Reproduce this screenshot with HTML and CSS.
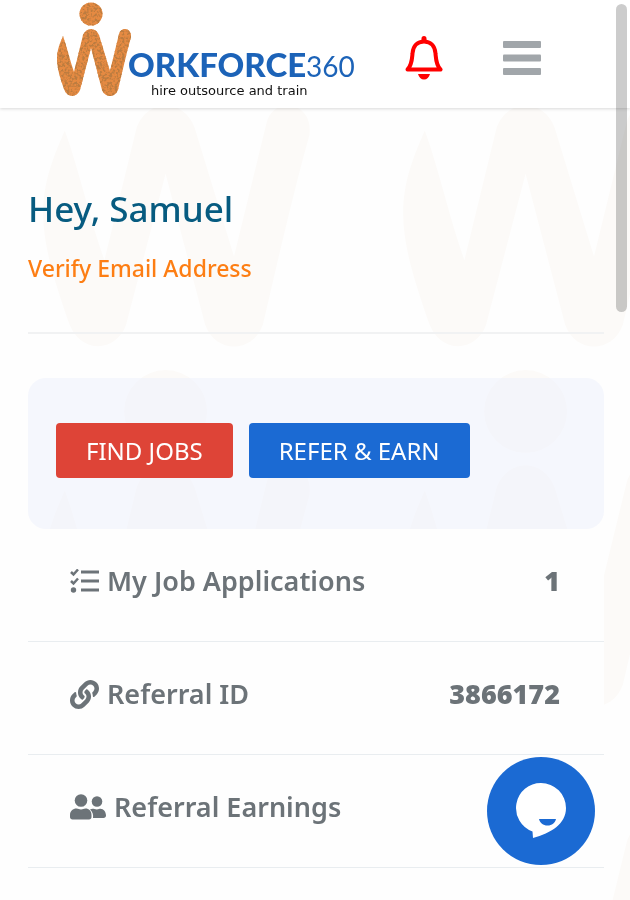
FILE: index.html
```html
<!DOCTYPE html>
<html lang="en">

<head>
  <meta charset="UTF-8" />
  <meta name="viewport" content="width=device-width, initial-scale=1" />
  <title>Workforce360</title>
  <link rel="stylesheet" href="styles.css">
</head>

<body>
  <svg class="watermark" aria-hidden="true">
    <defs>
      <filter id="grain" x="-5%" y="-5%" width="110%" height="110%">
        <feTurbulence type="fractalNoise" baseFrequency="0.4" numOctaves="2" seed="4" result="noise" />
        <feColorMatrix in="noise" type="matrix" values="0 0 0 0 0.5  0 0 0 0 0.2  0 0 0 0 0.05  5 0 0 0 -2.2" result="spots" />
        <feComposite in="spots" in2="SourceGraphic" operator="in" result="inside" />
        <feMerge>
          <feMergeNode in="SourceGraphic" />
          <feMergeNode in="inside" />
        </feMerge>
      </filter>
      <symbol id="mark" viewBox="0 0 140 100" overflow="visible">
        <circle cx="91" cy="14" r="11.5" />
        <path d="M63 36C60 43 57 50 57 59C57 69 61 80 64 89C67 98 77 98 80 90L91 48L102 90C105 98 115 98 118 90C122 73 126 55 131 37C132 28 121 26 119 34L110 71L99 35C96 27 86 27 83 35L74 72C70 61 67 47 63 36Z" />
      </symbol>
      <pattern id="tiles" width="360" height="360" patternUnits="userSpaceOnUse">
        <use href="#mark" x="-162" y="1" width="504" height="360" />
        <use href="#mark" x="198" y="1" width="504" height="360" />
      </pattern>
    </defs>
    <rect width="100%" height="100%" fill="url(#tiles)" />
  </svg>

  <header class="topbar">
    <a class="logo" href="#" aria-label="Workforce360">
      <svg class="logo-mark" viewBox="56 0 76 100" aria-hidden="true">
        <g filter="url(#grain)">
          <use href="#mark" width="140" height="100" />
        </g>
      </svg>
      <span class="logo-text">
        <span class="logo-name"><b>ORKFORCE</b><span class="logo-num">360</span></span>
        <span class="logo-tag">hire outsource and train</span>
      </span>
    </a>
    <button class="icon-btn bell" aria-label="Notifications">
      <svg viewBox="0 0 38 44" width="38" height="44">
        <path d="M2.500 33.500C7 29 7 23 7.500 17.500C8 9.500 13 5.500 19 5.500S30 9.500 30.500 17.500C31 23 31 29 35.500 33.500Z" fill="none" stroke="#f00" stroke-width="4" stroke-linejoin="round" />
        <path d="M16.500 5V2.500a2.500 2.500 0 0 1 5 0V5zM13 38h12c-1 3.500-3 5.500-6 5.500s-5-2-6-5.500z" fill="#f00" />
      </svg>
    </button>
    <button class="icon-btn menu" aria-label="Menu">
      <svg viewBox="0 0 38 34" width="38" height="34" fill="#a1a6aa">
        <rect width="38" height="7" rx="1" />
        <rect y="13.500" width="38" height="7" rx="1" />
        <rect y="27" width="38" height="7" rx="1" />
      </svg>
    </button>
  </header>

  <main>
    <section class="greeting">
      <h1>Hey, Samuel</h1>
      <a class="verify" href="#">Verify Email Address</a>
    </section>

    <section class="actions">
      <button class="btn btn-red">FIND JOBS</button>
      <button class="btn btn-blue">REFER &amp; EARN</button>
    </section>

    <ul class="stats">
      <li>
        <svg viewBox="0 0 29 25" width="29" height="25" aria-hidden="true">
          <path d="M1 3l2.500 2.500L8 .5M1 12l2.500 2.500L8 9.500" fill="none" stroke="currentColor" stroke-width="2.500" />
          <circle cx="3.500" cy="21" r="2.700" fill="currentColor" />
          <path d="M11 3h18M11 12h18M11 21h18" stroke="currentColor" stroke-width="3" />
        </svg>
        <span class="label">My Job Applications</span>
        <span class="value">1</span>
      </li>
      <li>
        <svg viewBox="0 0 512 512" width="29" height="29" fill="currentColor" aria-hidden="true">
          <path d="M326.612 185.391c59.747 59.809 58.927 155.698.36 214.590-.11.120-.240.250-.360.370l-67.200 67.200c-59.270 59.270-155.699 59.262-214.960 0-59.270-59.260-59.270-155.700 0-214.960l37.106-37.106c9.840-9.840 26.786-3.300 27.294 10.606.648 17.722 3.826 35.527 9.690 52.721 1.986 5.822.567 12.262-3.783 16.612l-13.087 13.087c-28.026 28.026-28.905 73.660-1.155 101.960 28.024 28.579 74.086 28.749 102.325.510l67.200-67.190c28.191-28.191 28.073-73.757 0-101.830-3.701-3.694-7.429-6.564-10.341-8.569a16.037 16.037 0 0 1-6.947-12.606c-.396-10.567 3.348-21.456 11.698-29.806l21.054-21.055c5.521-5.521 14.182-6.199 20.584-1.731a152.482 152.482 0 0 1 20.522 17.197zM467.547 44.449c-59.261-59.262-155.690-59.270-214.960 0l-67.200 67.200c-.120.120-.250.250-.360.370-58.566 58.892-59.387 154.781.360 214.590a152.454 152.454 0 0 0 20.521 17.196c6.402 4.468 15.064 3.789 20.584-1.731l21.054-21.055c8.350-8.350 12.094-19.239 11.698-29.806a16.037 16.037 0 0 0-6.947-12.606c-2.912-2.005-6.640-4.875-10.341-8.569-28.073-28.073-28.191-73.639 0-101.830l67.200-67.190c28.239-28.239 74.300-28.069 102.325.510 27.750 28.300 26.872 73.934-1.155 101.960l-13.087 13.087c-4.350 4.350-5.769 10.790-3.783 16.612 5.864 17.194 9.042 34.999 9.690 52.721.509 13.906 17.454 20.446 27.294 10.606l37.106-37.106c59.271-59.259 59.271-155.699.001-214.959z" />
        </svg>
        <span class="label">Referral ID</span>
        <span class="value">3866172</span>
      </li>
      <li>
        <svg viewBox="0 0 36 26" width="36" height="26" fill="currentColor" aria-hidden="true">
          <circle cx="11" cy="6.500" r="6.300" />
          <circle cx="27" cy="7.500" r="5.300" />
          <path d="M0 23v-2c0-4 3-6.500 6.500-6.500 2 0 2.500 1 4.500 1s2.500-1 4.500-1c3.500 0 6 2.500 6 6.500v2c0 1.500-1 2.500-2.500 2.500H2.500C1 25.500 0 24.500 0 23z" />
          <path d="M20 15.500c1.500-1 3-1 4.500-.5s3 .5 4.500 0c4-1 7 2.500 7 6.500 0 1.500-1 2.500-2.500 2.500H23c.5-3.500-.5-6.500-3-8.500z" />
        </svg>
        <span class="label">Referral Earnings</span>
      </li>
    </ul>
  </main>

  <button class="chat" aria-label="Open chat">
    <svg viewBox="0 0 50 56" width="50" height="56" aria-hidden="true">
      <path d="M25 0a25 25 0 0 1 25 25c0 16-15 25-33 30l-.5-6.500A25 25 0 0 1 25 0z" fill="#fff" />
      <path d="M23 36h17c-1 4-4 6.500-8.500 6.500S24 40 23 36z" fill="#1b6ad3" />
    </svg>
  </button>

  <div class="scroll-thumb"></div>
</body>

</html>
```
FILE: styles.css
```css
* {
  box-sizing: border-box;
}

body {
  margin: 0;
  font-family: "Noto Sans", sans-serif;
  background: #fefefe;
  color: #6c7378;
}

button {
  border: 0;
  padding: 0;
  font-family: inherit;
  cursor: pointer;
}

/* faint brand figure repeated behind the page */
.watermark {
  position: fixed;
  inset: 0;
  z-index: -1;
  width: 100%;
  height: 100%;
  fill: #fcfaf8;
}

.topbar {
  display: flex;
  align-items: center;
  height: 108px;
  padding: 0 89px 0 56px;
  background: #fff;
  box-shadow: 0 1px 3px rgba(0, 0, 0, 0.15);
}

.logo {
  display: flex;
  color: #1c63b8;
  text-decoration: none;
  height: 108px;
}

.logo-mark {
  width: 76px;
  height: 100px;
  fill: #e58a42;
}

.logo-text {
  display: flex;
  flex-direction: column;
  margin-left: -4px;
  padding-top: 45px;
}

.logo-name {
  font-family: Lato, sans-serif;
  font-size: 33px;
  line-height: 38px;
}

.logo-name b {
  font-weight: 900;
}

.logo-num {
  font-size: 28px;
  font-weight: 400;
}

.logo-tag {
  padding-left: 23px;
  font-family: "DejaVu Sans", sans-serif;
  font-size: 13px;
  line-height: 12px;
  color: #111;
}

.icon-btn {
  display: flex;
  background: none;
}

.bell {
  margin-left: auto;
  margin-top: 8px;
}

.menu {
  margin-left: 60px;
  margin-top: 8px;
}

main {
  padding: 0 26px 0 28px;
}

.greeting {
  padding: 76px 0 46px;
  border-bottom: 2px solid #f1f2f3;
}

h1 {
  margin: 0;
  font-size: 35px;
  line-height: 50px;
  font-weight: 500;
  color: #075b80;
}

.verify {
  display: block;
  margin-top: 16px;
  font-size: 23px;
  line-height: 36px;
  font-weight: 500;
  color: #fd7e14;
  text-decoration: none;
}

.actions {
  display: flex;
  gap: 16px;
  margin-top: 44px;
  padding: 45px 28px 51px;
  border-radius: 18px;
  background: rgba(233, 238, 252, 0.4);
}

.btn {
  height: 55px;
  padding: 0 30px;
  border-radius: 4px;
  font-size: 24px;
  color: #fff;
}

.btn-red {
  background: #de4437;
}

.btn-blue {
  background: #1b6ad3;
}

.stats {
  margin: 0;
  padding: 0 0 32px;
  list-style: none;
  background: #fefefe;
}

.stats li {
  display: flex;
  align-items: center;
  gap: 8px;
  padding: 32px 44px 40px 42px;
  border-bottom: 1px solid #e9edf0;
  font-size: 27px;
  line-height: 40px;
  font-weight: 600;
}

.value {
  margin-left: auto;
  font-weight: 900;
}

.chat {
  position: fixed;
  right: 35px;
  bottom: 35px;
  display: flex;
  align-items: center;
  justify-content: center;
  width: 108px;
  height: 108px;
  border-radius: 50%;
  background: #1b6ad3;
}

.scroll-thumb {
  position: fixed;
  top: 4px;
  right: 3px;
  width: 11px;
  height: 308px;
  border-radius: 6px;
  background: rgba(0, 0, 0, 0.2);
}
```
